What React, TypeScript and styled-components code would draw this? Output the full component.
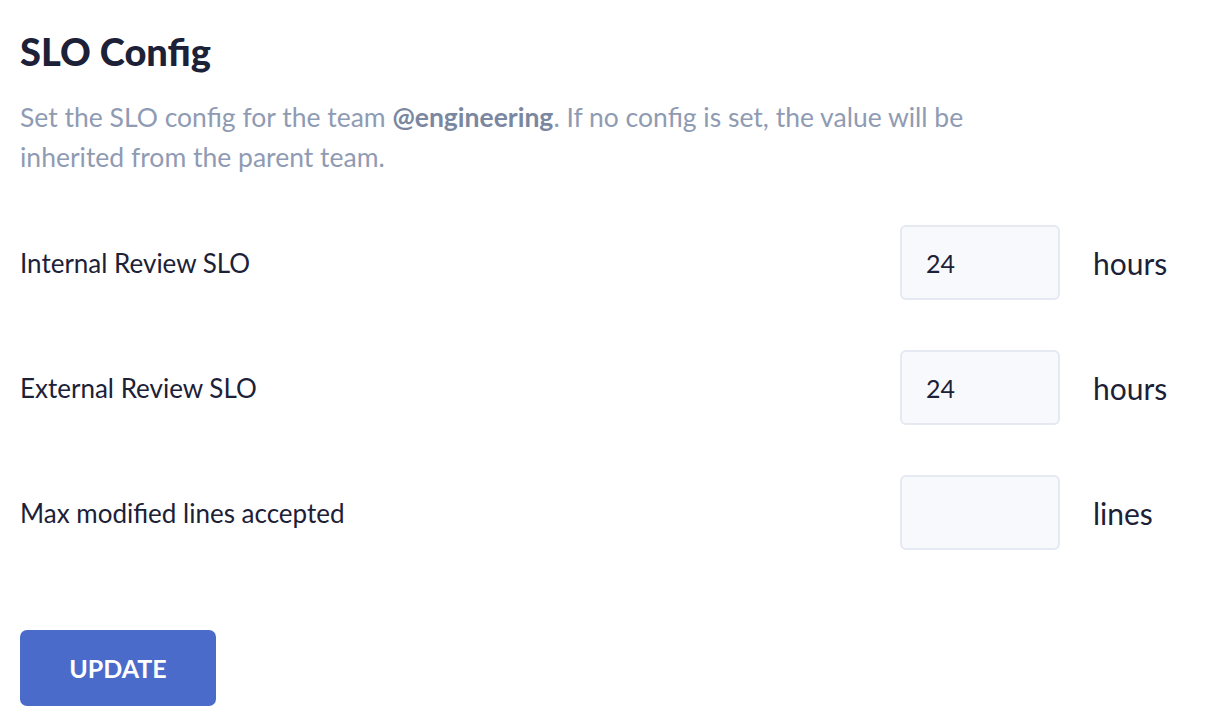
import React from 'react';
import styled, { createGlobalStyle } from 'styled-components';

const GlobalStyle = createGlobalStyle`
  body {
    margin: 0;
    background: #ffffff;
    font-family: Lato, "Noto Sans", sans-serif;
    color: #222b45;
  }
`;

const fields = [
  { label: 'Internal Review SLO', value: '24', unit: 'hours' },
  { label: 'External Review SLO', value: '24', unit: 'hours' },
  { label: 'Max modified lines accepted', value: '', unit: 'lines' },
];

function App() {
  return (
    <>
      <GlobalStyle />
      <Page>
        <Title>SLO Config</Title>
        <Description>
          Set the SLO config for the team <strong>@engineering</strong>. If no config is set, the value will be
          inherited from the parent team.
        </Description>
        <Form>
          {fields.map((field) => (
            <Row key={field.label}>
              <Label>{field.label}</Label>
              <Input defaultValue={field.value} />
              <Unit>{field.unit}</Unit>
            </Row>
          ))}
        </Form>
        <UpdateButton>UPDATE</UpdateButton>
      </Page>
    </>
  );
}

export default App;

const Page = styled.div`
  display: flex;
  flex-direction: column;
  align-items: flex-start;
  padding: 23px 33px 20px 20px;
`;

const Title = styled.h1`
  margin: 0;
  font-size: 38px;
  line-height: 56px;
  font-weight: 900;
  color: #1c2138;
`;

const Description = styled.p`
  margin: 18px 0 0;
  max-width: 970px;
  font-size: 26.5px;
  line-height: 40px;
  color: #8f9bb3;

  strong {
    font-weight: 700;
    color: #7b87a0;
  }
`;

const Form = styled.div`
  display: flex;
  flex-direction: column;
  gap: 50px;
  margin-top: 48px;
  width: 100%;
`;

const Row = styled.div`
  display: grid;
  grid-template-columns: 1fr 160px 80px;
  column-gap: 33px;
  align-items: center;
`;

const Label = styled.span`
  font-size: 26px;
  color: #1c2138;
`;

const Input = styled.input`
  box-sizing: border-box;
  width: 160px;
  height: 75px;
  padding: 0 24px;
  border: 2px solid #e4e9f2;
  border-radius: 6px;
  background: #f7f9fc;
  font-family: inherit;
  font-size: 25px;
  color: #1c2138;
  outline: none;
`;

const Unit = styled.span`
  font-size: 30px;
  color: #1c2138;
`;

const UpdateButton = styled.button`
  margin-top: 80px;
  width: 196px;
  height: 76px;
  border: none;
  border-radius: 7px;
  background: #4b6bcb;
  color: #ffffff;
  font-family: inherit;
  font-size: 25px;
  font-weight: 700;
`;
